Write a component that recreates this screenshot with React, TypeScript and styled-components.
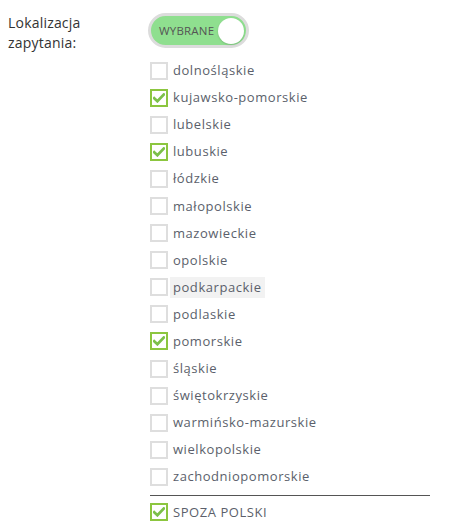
import React from "react";
import styled, { createGlobalStyle } from "styled-components";

const Global = createGlobalStyle`
  html, body { margin: 0; padding: 0; background: #fff; }
  body { font-family: "Open Sans", "Noto Sans", sans-serif; }
`;

const Page = styled.div`
  display: grid;
  grid-template-columns: 142px 1fr;
  padding: 12px 0 0 8px;
`;

const Label = styled.div`
  font-size: 14px;
  line-height: 20px;
  color: #333;
  padding-top: 1px;
  letter-spacing: 0.2px;
`;

const Right = styled.div`
  display: flex;
  flex-direction: column;
  align-items: flex-start;
`;

const Toggle = styled.div`
  width: 85px;
  height: 29px;
  border: 3px solid #dcdcdc;
  border-radius: 20px;
  background: #8fdf8f;
  display: flex;
  align-items: center;
  justify-content: space-between;
  padding: 0 2px 0 8px;
  box-sizing: content-box;
  margin-left: -2px;
  margin-top: 1px;
`;

const ToggleText = styled.span`
  font-size: 11.5px;
  color: #555;
  letter-spacing: 0.2px;
`;

const Knob = styled.span`
  width: 26px;
  height: 26px;
  border-radius: 50%;
  background: #fff;
  box-shadow: 0 1px 2px rgba(0,0,0,0.15);
`;

const List = styled.div`
  display: flex;
  flex-direction: column;
  margin-top: 9px;
`;

const Row = styled.div`
  display: flex;
  align-items: center;
  height: 27.1px;
  gap: 5px;
`;

const Box = styled.span<{ $checked: boolean }>`
  width: 14px;
  height: 14px;
  border: 2px solid ${(p) => (p.$checked ? "#8cc63f" : "#dedede")};
  display: flex;
  align-items: center;
  justify-content: center;
  flex: none;
`;

const Text = styled.span<{ $hover?: boolean }>`
  font-size: 13px;
  color: #5b5f6b;
  line-height: 21px;
  letter-spacing: 0.55px;
  padding: 0 3px 0 0;
  margin-left: ${(p) => (p.$hover ? "-3px" : "0")};
  padding-left: ${(p) => (p.$hover ? "3px" : "0")};
  background: ${(p) => (p.$hover ? "#f2f2f2" : "transparent")};
`;

const Divider = styled.div`
  height: 1px;
  background: #555;
  width: 280px;
  margin: 4px 0 3px 0;
`;

const Check = () => (
  <svg width="12" height="10" viewBox="0 0 12 10">
    <path d="M1.2 5.2 L4.4 8.2 L10.8 1.6" fill="none" stroke="#7cc04a" strokeWidth="2.8" strokeLinecap="square" />
  </svg>
);

const items: [string, boolean][] = [
  ["dolnośląskie", false],
  ["kujawsko-pomorskie", true],
  ["lubelskie", false],
  ["lubuskie", true],
  ["łódzkie", false],
  ["małopolskie", false],
  ["mazowieckie", false],
  ["opolskie", false],
  ["podkarpackie", false],
  ["podlaskie", false],
  ["pomorskie", true],
  ["śląskie", false],
  ["świętokrzyskie", false],
  ["warmińsko-mazurskie", false],
  ["wielkopolskie", false],
  ["zachodniopomorskie", false],
];

export default function App() {
  return (
    <>
      <Global />
      <Page>
        <Label>
          Lokalizacja
          <br />
          zapytania:
        </Label>
        <Right>
          <Toggle>
            <ToggleText>WYBRANE</ToggleText>
            <Knob />
          </Toggle>
          <List>
            {items.map(([name, checked]) => (
              <Row key={name}>
                <Box $checked={checked}>{checked && <Check />}</Box>
                <Text $hover={name === "podkarpackie"}>{name}</Text>
              </Row>
            ))}
            <Divider />
            <Row>
              <Box $checked>
                <Check />
              </Box>
              <Text>SPOZA POLSKI</Text>
            </Row>
          </List>
        </Right>
      </Page>
    </>
  );
}
